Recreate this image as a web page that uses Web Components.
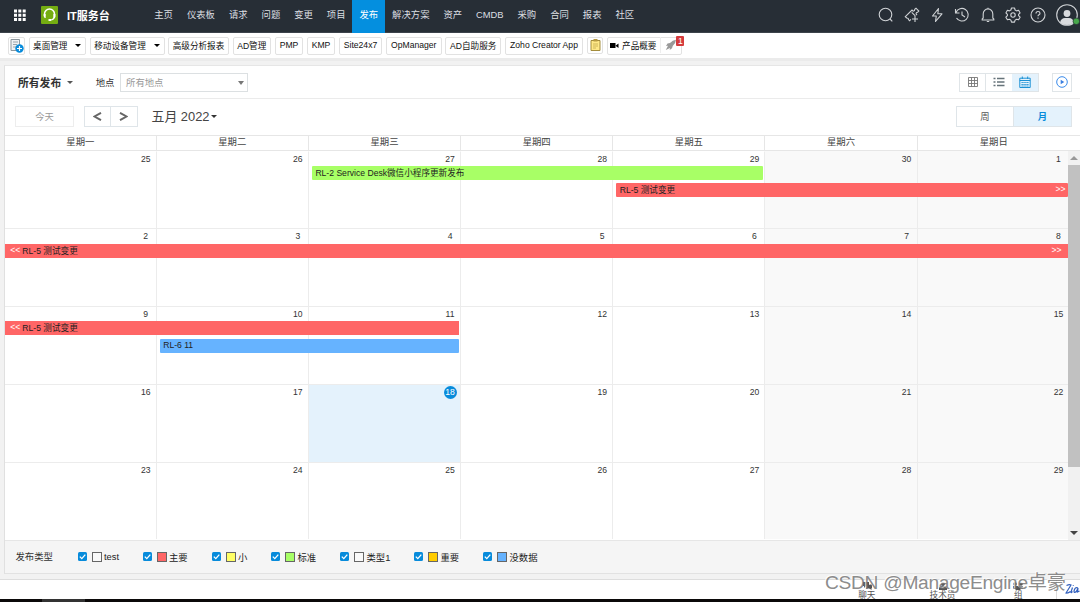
<!DOCTYPE html>
<html lang="zh-CN">
<head>
<meta charset="utf-8">
<title>IT服务台</title>
<style>
    body {
        margin: 0;
        width: 1080px;
        height: 602px;
        overflow: hidden;
        background: #f2f2f2;
        color: #333;
        font-family: "Liberation Sans", "Noto Sans CJK SC", sans-serif;
        font-size: 9.35px;
    }
</style>
</head>
<body>
<release-app></release-app>

<script>
class TopNav extends HTMLElement {
    constructor() {
        super();
        this.attachShadow({ mode: 'open' });
        const tabs = ['主页', '仪表板', '请求', '问题', '变更', '项目', '发布', '解决方案', '资产', 'CMDB', '采购', '合同', '报表', '社区'];
        this.shadowRoot.innerHTML = `
            <style>
                :host {
                    display: flex;
                    align-items: center;
                    height: 33px;
                    box-sizing: border-box;
                    padding-bottom: 2px;
                    background: #272e36;
                    border-bottom: 1px solid #3c434b;
                    color: #dcdfe2;
                }
                .apps { margin-left: 13px; }
                .logo { margin-left: 15px; }
                svg { display: block; flex: none; }
                b { width: 80.300px; margin-left: 9px; padding-bottom: 1px; font-size: 11px; color: #fff; white-space: nowrap; }
                nav { display: flex; height: 33px; align-self: flex-start; }
                nav span { padding: 0 6.970px; line-height: 31.500px; white-space: nowrap; }
                nav .on { background: #048fdf; color: #fff; }
                .tools { display: flex; align-items: center; gap: 9.300px; margin-left: auto; }
                .tools svg { fill: none; stroke: #d0d3d6; stroke-width: 1.1; }
                .tools svg:nth-child(-n+7) { position: relative; left: -.5px; }
            </style>
            <svg class="apps" width="13" height="13" fill="#fff">
                <path d="M1 .5h3v3h-3zM5.300.5h3v3h-3zM9.700.5h3v3h-3zM1 4.800h3v3h-3zM5.300 4.800h3v3h-3zM9.700 4.800h3v3h-3zM1 9h3v3h-3zM5.300 9h3v3h-3zM9.700 9h3v3h-3z"/>
            </svg>
            <svg class="logo" width="17" height="18">
                <rect width="17" height="18" rx="1" fill="#75ad12"/>
                <path d="M3.500 10V8a5 5 0 0 1 10 0v2.500q-.5 3.200-4.200 3.600" fill="none" stroke="#fff" stroke-width="1.500"/>
                <path d="M2.700 8h2v4H4q-1.300-.5-1.300-2zM12.400 8h2v2.500q0 1.500-1.300 1.500h-.7zM7.500 13h2.500v2H7.500z" fill="#fff"/>
            </svg>
            <b>IT服务台</b>
            <nav>${tabs.map(t => `<span class="${t === '发布' ? 'on' : ''}">${t}</span>`).join('')}</nav>
            <div class="tools">
                <svg width="16" height="16"><circle cx="7.500" cy="7.500" r="6.300"/><path d="M12 12l2.300 2.300"/></svg>
                <svg width="16" height="16"><path d="M6.800 12.300L5.600 13.800l-1.200-1.200q.2-1.600-1.700-1.600L1.300 9.700 8 3l1.200 1.200q1.700-.2 1.600-1.900L12 1.200l2.800 2.800-1.100 1.200q-1.700 0-1.700 1.700l1 1.200M7.700 5.300l3.600 3.500M11 9v6M8 12h6"/></svg>
                <svg width="16" height="16"><path d="M9.500 1.500L3.500 9h3.800l-.8 5.500L13 6.800H8.800z" stroke-linejoin="round"/></svg>
                <svg width="16" height="16"><path d="M2 5.500A6.300 6.300 0 1 1 2.500 11M1.500 2v4h4M8 4.500V8l3 2"/></svg>
                <svg width="16" height="16"><path d="M2.200 13V12l1-1V7a4.500 4.800 0 0 1 9.600 0v4l1 1v1zM8 2.200V.8M6.800 14.500h2.400"/></svg>
                <svg width="16" height="16"><path d="M6.500 1h3l.6 2 1.500.9 2-.6 1.500 2.600-1.500 1.500v1.300l1.500 1.500-1.500 2.600-2-.6-1.500.9-.6 2h-3l-.6-2-1.500-.9-2 .6L.9 10.200l1.500-1.500V7.400L.9 5.900l1.500-2.600 2 .6L5.900 3z" stroke-linejoin="round"/><circle cx="8" cy="8" r="2.200"/></svg>
                <svg width="16" height="16"><circle cx="8" cy="8" r="7"/><path d="M6 6.500q0-2 2-2t2 1.700q0 1-1 1.500t-1 1.600M8 10.500v1.200"/></svg>
                <svg width="24" height="24">
                    <circle cx="11" cy="12" r="10.300"/>
                    <circle cx="11" cy="10.500" r="3.400" fill="#d8dadd" stroke="none"/>
                    <path d="M4 19.500q1-4.600 5-4.600h4q4 0 5 4.600-3 2.600-7 2.600t-7-2.600z" fill="#d8dadd" stroke="none"/>
                    <circle cx="20.300" cy="18.300" r="3.300" fill="#48a84c" stroke="#272e36" stroke-width=".7"/>
                </svg>
            </div>
        `;
    }
}

class QuickLink extends HTMLElement {
    constructor() {
        super();
        this.attachShadow({ mode: 'open' });
        this.shadowRoot.innerHTML = `
            <style>
                :host {
                    display: flex;
                    align-items: center;
                    justify-content: center;
                    box-sizing: border-box;
                    height: 18px;
                    padding-bottom: 1px;
                    border: 1px solid #e2e2e2;
                    border-radius: 2px;
                    font-size: 8.6px;
                    color: #111;
                    background: #fff;
                    white-space: nowrap;
                }
                i {
                    display: none;
                    margin: 1px 0 0 8px;
                    border: 3px solid transparent;
                    border-top-color: #000;
                    border-bottom: 0;
                }
                :host([menu]) i { display: block; }
            </style>
            <slot></slot><i></i>
        `;
    }
}

class QuickBar extends HTMLElement {
    constructor() {
        super();
        this.attachShadow({ mode: 'open' });
        const links = [['高级分析报表', 60.5], ['AD管理', 38.5], ['PMP', 28.5], ['KMP', 28], ['Site24x7', 43.500], ['OpManager', 55.500], ['AD自助服务', 56], ['Zoho Creator App', 78]];
        this.shadowRoot.innerHTML = `
            <style>
                :host {
                    display: flex;
                    align-items: center;
                    gap: 3.75px;
                    height: 25px;
                    padding-left: 8px;
                    background: #fff;
                    border-bottom: 3px solid #ebebeb;
                }
                svg { display: block; }
                quick-link { flex: none; }
                .video svg { margin-right: 3px; }
                .video span { margin-right: 3.5px; }
                .rocket {
                    position: relative;
                    display: flex;
                    align-items: center;
                    border-left: 1px solid #eee;
                    height: 16px;
                    padding-left: 4px;
                }
                em {
                    position: absolute;
                    left: 15.500px;
                    top: -1px;
                    width: 8px;
                    height: 10px;
                    border-radius: 1px;
                    background: #d43a3c;
                    color: #fff;
                    font: 8.600px/10px "Liberation Sans", sans-serif;
                    text-align: center;
                }
            </style>
            <quick-link style="width:17px">
                <svg width="15" height="15"><path d="M2 1.500h8.500v11H2z" fill="#eef1f3" stroke="#8c979e"/><path d="M4 4h5M4 6.500h4M4 9h3" stroke="#9aa5ac"/><circle cx="10.500" cy="10.500" r="4.200" fill="#078bdb"/><path d="M10.500 8v5M8 10.500h5" stroke="#fff" stroke-width="1.200"/></svg>
            </quick-link>
            <quick-link menu style="width:57px">桌面管理</quick-link>
            <quick-link menu style="width:75px">移动设备管理</quick-link>
            ${links.map(([t, w]) => `<quick-link style="width:${w}px">${t}</quick-link>`).join('')}
            <quick-link style="width:16.500px;height:17px">
                <svg width="13" height="14"><path d="M2 2.500h9v10H2z" fill="#ffe887" stroke="#a48d3c"/><path d="M4.500 1h4v2.500h-4z" fill="#b79b43"/><path d="M4 6h5M4 8h5M4 10h3" stroke="#c2a94f" stroke-width=".8"/></svg>
            </quick-link>
            <quick-link class="video" style="width:75px">
                <svg width="10" height="7"><path d="M1 1h5.500v5H1zM6.800 3.600L9.500 1.500v4.500L6.800 4z"/></svg>
                <span>产品概要</span>
                <div class="rocket">
                    <svg width="12" height="12"><path d="M11 .8Q7.500 1 5 4L2.500 4.500 1 7l2-.3L.8 11 5 9l-.3 2L7 9.300 7.700 7Q10.800 4.500 11 .8z" fill="#999"/></svg>
                    <em>1</em>
                </div>
            </quick-link>
        `;
    }
}

class FilterBar extends HTMLElement {
    constructor() {
        super();
        this.attachShadow({ mode: 'open' });
        this.shadowRoot.innerHTML = `
            <style>
                :host {
                    display: flex;
                    align-items: center;
                    box-sizing: border-box;
                    height: 33px;
                    padding: 0 8px 0 13px;
                    border-bottom: 1px solid #ebebeb;
                }
                b { font-size: 10.8px; }
                i { border: 3px solid transparent; border-top-color: #555; border-bottom: 0; }
                b + i { margin: 1px 22.500px 0 6px; }
                b, b + i + span { padding-bottom: 1px; }
                .select {
                    display: flex;
                    align-items: center;
                    justify-content: space-between;
                    box-sizing: border-box;
                    width: 128px;
                    height: 19px;
                    margin-left: 5.700px;
                    padding: 0 3px 1px 5px;
                    border: 1px solid #dce0e2;
                    color: #999;
                }
                .select i { margin-top: 2px; border-width: 4px 3px 0; border-top-color: #777; }
                .views { display: flex; margin-left: auto; }
                .views span, .play {
                    display: flex;
                    align-items: center;
                    justify-content: center;
                    box-sizing: border-box;
                    width: 27px;
                    height: 19px;
                    border: 1px solid #e0e5e8;
                }
                .views span + span { margin-left: -.5px; border-left: 0; }
                .views .on { background: #e4f2fc; }
                .play { width: 20px; margin-left: 13px; }
                svg { display: block; fill: none; }
            </style>
            <b>所有发布</b><i></i>
            <span>地点</span>
            <div class="select">所有地点<i></i></div>
            <div class="views">
                <span><svg width="10" height="10" stroke="#777"><path d="M.5.500h9v9h-9zM.5 3.500h9M.5 6.500h9M3.500.500v9M6.500.500v9" stroke-width=".9"/></svg></span>
                <span><svg width="12" height="10" stroke="#66737a" stroke-width="1.500"><path d="M.5 1.500h2M4 1.500h7.500M.5 5h2M4 5h7.500M.5 8.500h2M4 8.500h7.500"/></svg></span>
                <span class="on"><svg width="12" height="12" stroke="#1b91d5"><path d="M.8 2.200h10.400v9.300H.8zM.8 4.500h10.400M3.300.500v2.500M8.700.500v2.500"/><path d="M2.500 6.500h7M2.500 8.500h7M2.500 10h7" stroke-dasharray="1.300 .6"/></svg></span>
            </div>
            <div class="play"><svg width="12" height="12"><circle cx="6" cy="6" r="5.300" stroke="#3a8bea"/><path d="M4.700 3.800v4.400L8.300 6z" fill="#3a7fe0"/></svg></div>
        `;
    }
}

class MonthBar extends HTMLElement {
    constructor() {
        super();
        this.attachShadow({ mode: 'open' });
        this.shadowRoot.innerHTML = `
            <style>
                :host {
                    display: flex;
                    align-items: center;
                    box-sizing: border-box;
                    height: 36px;
                    padding: 0 8px 1px 10px;
                }
                span {
                    display: flex;
                    align-items: center;
                    justify-content: center;
                    box-sizing: border-box;
                    height: 20.500px;
                    padding-bottom: 1px;
                    border: 1px solid #dfe5e9;
                }
                .today { width: 59px; color: #999; border-color: #ededed; }
                .step { width: 27px; padding: 0; }
                .step + .step { width: 26.500px; }
                .step + .step, .mode + .mode { border-left: 0; }
                .today + .step { margin-left: 10px; }
                svg { display: block; fill: none; stroke: #666; stroke-width: 1.900; }
                h2 { margin: 0 0 0 14px; font-size: 12.900px; line-height: 18px; font-weight: normal; color: #444; }
                i { margin-left: 1px; border: 3px solid transparent; border-top-color: #333; border-bottom: 0; }
                .mode { width: 58px; color: #555; }
                h2 + i + .mode { margin-left: auto; }
                .on { background: #e4f2fc; color: #078bdb; font-weight: bold; }
            </style>
            <span class="today">今天</span>
            <span class="step"><svg width="9" height="9"><path d="M8 .8L1.500 4.500 8 8.200"/></svg></span>
            <span class="step"><svg width="9" height="9"><path d="M1 .8l6.500 3.700L1 8.200"/></svg></span>
            <h2>五月 2022</h2><i></i>
            <span class="mode">周</span>
            <span class="mode on">月</span>
        `;
    }
}

class CalendarEvent extends HTMLElement {
    constructor() {
        super();
        this.attachShadow({ mode: 'open' });
        this.shadowRoot.innerHTML = `
            <style>
                :host {
                    display: flex;
                    align-items: center;
                    box-sizing: border-box;
                    height: 14px;
                    margin: 0 2.500px 3.200px 3px;
                    padding: 0 0 2px 3.500px;
                    border-radius: 1px;
                    font-size: 8.600px;
                    color: #222;
                    white-space: nowrap;
                }
                :host([before]) { margin-left: 0; padding-left: 5.300px; border-radius: 0; }
                :host([after]) { margin-right: 0; }
                em { display: none; font-style: normal; color: #fff; }
                :host([before]) .before { display: block; margin-right: 2px; }
                :host([after]) .after { display: block; margin-left: auto; margin-right: 2px; }
                :host([before][after]) .after { margin-right: 6px; }
            </style>
            <em class="before">&lt;&lt;</em><slot></slot><em class="after">&gt;&gt;</em>
        `;
    }
}

class CalendarWeek extends HTMLElement {
    constructor() {
        super();
        this.attachShadow({ mode: 'open' });
        this.shadowRoot.innerHTML = `
            <style>
                :host { display: block; position: relative; height: 77.800px; }
                .days, .events {
                    display: grid;
                    grid-template-columns: 151.700px repeat(5, 152.200px) 1fr;
                }
                .days { height: 100%; }
                .day {
                    display: flex;
                    justify-content: flex-end;
                    box-sizing: border-box;
                    padding: 1px 3.500px 0 0;
                    border-right: 1px solid #ececec;
                    border-top: 1px solid #ececec;
                }
                :host(:first-child) .day { border-top-color: transparent; }
                .day:nth-child(n+6) { background: #f9f9f9; }
                .day:last-child { border-right: 0; padding-right: 2.500px; }
                .day span {
                    width: 13px;
                    height: 13px;
                    border-radius: 50%;
                    font-size: 8.600px;
                    line-height: 13px;
                    text-align: center;
                }
                .day.today { background: #e4f2fc; }
                .today span { background: #078bdb; color: #fff; }
                .events { position: absolute; left: 0; right: 0; top: 15.300px; }
            </style>
            <div class="days"></div>
            <div class="events"><slot></slot></div>
        `;
    }

    connectedCallback() {
        const today = this.getAttribute('today');
        this.shadowRoot.querySelector('.days').innerHTML = this.getAttribute('days').split(' ')
            .map(d => `<div class="day ${d === today ? 'today' : ''}"><span>${d}</span></div>`)
            .join('');
    }
}

class MonthCalendar extends HTMLElement {
    constructor() {
        super();
        this.attachShadow({ mode: 'open' });
        this.shadowRoot.innerHTML = `
            <style>
                :host { display: block; height: 405px; }
                .names {
                    display: grid;
                    grid-template-columns: 151.700px repeat(6, 152.200px);
                    box-sizing: border-box;
                    height: 15.500px;
                    border-top: 1px solid #e6e6e6;
                    border-bottom: 1px solid #e6e6e6;
                    overflow: hidden;
                }
                .names span {
                    box-sizing: border-box;
                    line-height: 13.500px;
                    text-align: center;
                    border-right: 1px solid #e6e6e6;
                    color: #444;
                }
                .names span:last-child { border: 0; }
                .body { display: flex; height: 389px; overflow: hidden; }
                .weeks { width: 1062.500px; }
                .bar {
                    display: flex;
                    flex-direction: column;
                    align-items: center;
                    flex: 1;
                    background: #f1f1f1;
                }
                .bar i { border: 0 solid transparent; }
                .bar .up { margin: 5px 0; border-width: 0 4px 4px; border-bottom-color: #999; }
                .thumb { width: 11.500px; height: 302px; background: #c1c1c1; }
                .bar .down { margin: auto 0 5px; border-width: 4px 4px 0; border-top-color: #444; }
                .red { background: #ff6666; }
                .green { background: #a8ff66; }
                .blue { background: #66b3ff; }
            </style>
            <div class="names">${[...'一二三四五六日'].map(d => `<span>星期${d}</span>`).join('')}</div>
            <div class="body">
                <div class="weeks">
                    <calendar-week days="25 26 27 28 29 30 1">
                        <calendar-event class="green" style="grid-column:3/6">RL-2 Service Desk微信小程序更新发布</calendar-event>
                        <calendar-event class="red" after style="grid-column:5/8">RL-5 测试变更</calendar-event>
                    </calendar-week>
                    <calendar-week days="2 3 4 5 6 7 8">
                        <calendar-event class="red" before after style="grid-column:1/8">RL-5 测试变更</calendar-event>
                    </calendar-week>
                    <calendar-week days="9 10 11 12 13 14 15">
                        <calendar-event class="red" before style="grid-column:1/4">RL-5 测试变更</calendar-event>
                        <calendar-event class="blue" style="grid-column:2/4">RL-6 11</calendar-event>
                    </calendar-week>
                    <calendar-week days="16 17 18 19 20 21 22" today="18"></calendar-week>
                    <calendar-week days="23 24 25 26 27 28 29"></calendar-week>
                </div>
                <div class="bar"><i class="up"></i><div class="thumb"></div><i class="down"></i></div>
            </div>
        `;
    }
}

class TypeLegend extends HTMLElement {
    constructor() {
        super();
        this.attachShadow({ mode: 'open' });
        // label, swatch colour, slot width
        const types = [['test', '#f9f9f9', 65], ['主要', '#ff6666', 69], ['小', '#ffff66', 59.500], ['标准', '#a8ff66', 69], ['类型1', '#f9f9f9', 74], ['重要', '#ffcc00', 69], ['没数据', '#66b3ff', 70]];
        this.shadowRoot.innerHTML = `
            <style>
                :host {
                    display: flex;
                    align-items: center;
                    box-sizing: border-box;
                    height: 34px;
                    padding: 0 0 1px 10.500px;
                    background: #f5f5f5;
                    border-top: 1px solid #e6e6e6;
                    border-bottom: 1px solid #e2e2e2;
                }
                .title { width: 62px; padding-bottom: 1px; }
                label { display: flex; align-items: center; white-space: nowrap; color: #222; }
                svg { display: block; }
                i {
                    box-sizing: border-box;
                    width: 10px;
                    height: 10px;
                    margin: 0 2.500px 0 5px;
                    border: 1px solid #666;
                }
            </style>
            <span class="title">发布类型</span>
            ${types.map(([t, c, w]) => `
                <label style="width:${w}px">
                    <svg width="9" height="9"><rect width="9" height="9" rx="1.500" fill="#078bdb"/><path d="M1.800 4.600l2 2 3.500-4" fill="none" stroke="#fff" stroke-width="1.300"/></svg>
                    <i style="background:${c}"></i>${t}
                </label>`).join('')}
        `;
    }
}

class ChatDock extends HTMLElement {
    constructor() {
        super();
        this.attachShadow({ mode: 'open' });
        this.shadowRoot.innerHTML = `
            <style>
                :host {
                    display: flex;
                    justify-content: flex-end;
                    box-sizing: border-box;
                    height: 20px;
                    background: #fff;
                    border-top: 1px solid #ddd;
                    color: #555;
                    font-size: 8.600px;
                }
                div {
                    display: flex;
                    flex-direction: column;
                    align-items: center;
                    width: 75.500px;
                    padding-top: 2px;
                    line-height: 10px;
                }
                div:nth-child(3) { width: 76px; }
                svg { display: block; flex: none; }
                .zia { width: 24px; box-sizing: border-box; border-left: 1px solid #ddd; padding: 3px 0 0 8px; }
                .zia svg { fill: none; stroke: #315fbd; stroke-width: 1.200; }
            </style>
            <div><svg width="12" height="8" fill="#555"><path d="M2 0h6v4H5L3 6V4H2zM5 4.500l4-2h2v4h-1l1 1.500-3-1.500H5z"/></svg>聊天</div>
            <div><svg width="12" height="8" fill="#555"><circle cx="6" cy="2" r="2"/><path d="M2 8V5.500L4 4h4l2 1.500V8z"/></svg>技术员</div>
            <div><svg width="12" height="8" fill="#555"><circle cx="3" cy="2" r="1.800"/><circle cx="9" cy="2" r="1.800"/><path d="M1 4h10v2.500H8.500V8h-5V6.500H1z"/></svg>组</div>
            <div class="zia"><svg width="15" height="12"><path d="M1.500 2.500q3-1.500 4.500-.5L1 10q2 .5 4.500-1.500M7.500 4.500L6 9q0 1.500 1.500-.5M8.300 2v.8M13 5q-2.500-1-3.500 1.500t0 3q2 0 3.500-4.500l-.5 4 2-1"/></svg></div>
        `;
    }
}

class ReleaseApp extends HTMLElement {
    constructor() {
        super();
        this.attachShadow({ mode: 'open' });
        this.shadowRoot.innerHTML = `
            <style>
                :host { display: block; position: relative; height: 602px; overflow: hidden; }
                main {
                    box-sizing: border-box;
                    margin: 4px 0 5px 4px;
                    height: 509px;
                    border-top: 1px solid #e6e6e6;
                    border-left: 1px solid #e0e0e0;
                    background: #fff;
                }
                .taskbar { height: 3px; background: linear-gradient(90deg, #0b0909 42px, #333 42px 85px, #0b0909 85px); }
                .mark {
                    position: absolute;
                    left: 825px;
                    top: 571px;
                    font-size: 19.200px;
                    line-height: 24px;
                    letter-spacing: -.3px;
                    white-space: nowrap;
                    color: rgba(110, 110, 110, .8);
                    text-shadow: -1px -1px 0 rgba(255, 255, 255, .8);
                }
            </style>
            <top-nav></top-nav>
            <quick-bar></quick-bar>
            <main>
                <filter-bar></filter-bar>
                <month-bar></month-bar>
                <month-calendar></month-calendar>
                <type-legend></type-legend>
            </main>
            <chat-dock></chat-dock>
            <div class="taskbar"></div>
            <div class="mark">CSDN @ManageEngine卓豪</div>
        `;
    }
}

customElements.define('top-nav', TopNav);
customElements.define('quick-link', QuickLink);
customElements.define('quick-bar', QuickBar);
customElements.define('filter-bar', FilterBar);
customElements.define('month-bar', MonthBar);
customElements.define('calendar-event', CalendarEvent);
customElements.define('calendar-week', CalendarWeek);
customElements.define('month-calendar', MonthCalendar);
customElements.define('type-legend', TypeLegend);
customElements.define('chat-dock', ChatDock);
customElements.define('release-app', ReleaseApp);
</script>
</body>
</html>
